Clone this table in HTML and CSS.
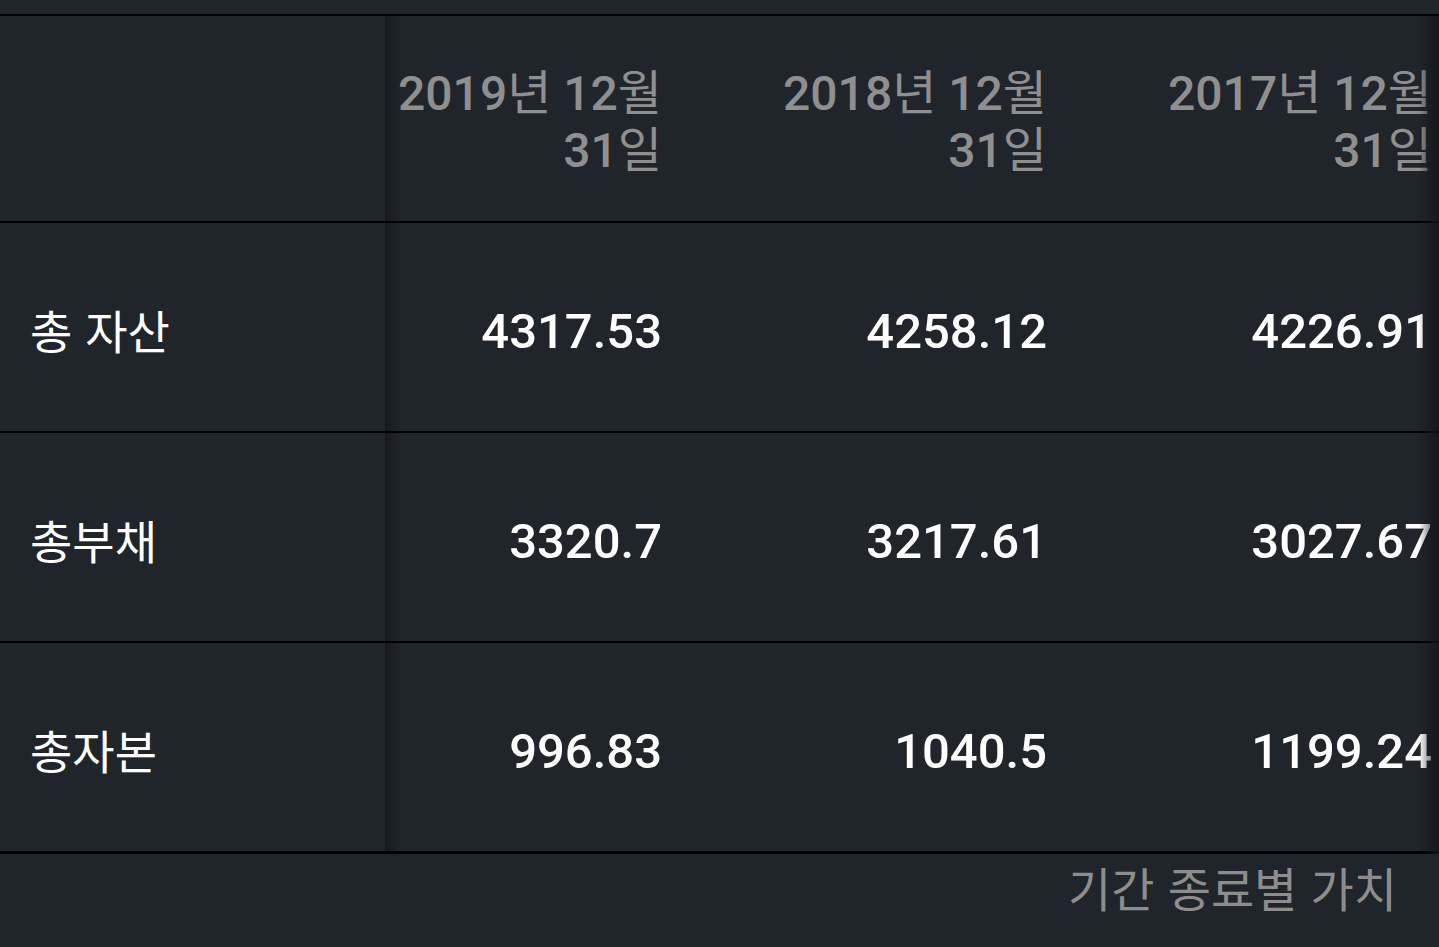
FILE: index.html
```html
<!DOCTYPE html>
<html lang="ko">
<head>
<meta charset="utf-8">
<title>재무상태표</title>
<link rel="stylesheet" href="styles.css">
</head>
<body>
<div class="page">
  <div class="top-strip"></div>
  <div class="table">
    <div class="row head">
      <div class="cell label"></div>
      <div class="cell date first"><p class="txt">2019<span class="k">년</span> 12<span class="k">월</span><br>31<span class="k">일</span></p></div>
      <div class="cell date"><p class="txt">2018<span class="k">년</span> 12<span class="k">월</span><br>31<span class="k">일</span></p></div>
      <div class="cell date"><p class="txt">2017<span class="k">년</span> 12<span class="k">월</span><br>31<span class="k">일</span></p></div>
    </div>
    <div class="row">
      <div class="cell label">총 자산</div>
      <div class="cell num first">4317.53</div>
      <div class="cell num">4258.12</div>
      <div class="cell num">4226.91</div>
    </div>
    <div class="row">
      <div class="cell label">총부채</div>
      <div class="cell num first">3320.7</div>
      <div class="cell num">3217.61</div>
      <div class="cell num">3027.67</div>
    </div>
    <div class="row last">
      <div class="cell label">총자본</div>
      <div class="cell num first">996.83</div>
      <div class="cell num">1040.5</div>
      <div class="cell num">1199.24</div>
    </div>
  </div>
  <div class="footer">기간 종료별 가치</div>
</div>
</body>
</html>
```

FILE: styles.css
```css
html, body {
  margin: 0;
  padding: 0;
  background: #20252b;
}
.page {
  width: 1439px;
  height: 947px;
  overflow: hidden;
  background: #20252b;
  font-family: Roboto, "Noto Sans CJK KR", sans-serif;
}
.top-strip {
  height: 14px;
  border-bottom: 2px solid #000;
}
.table {
  position: relative;
  overflow: hidden;
}
.table::after {
  content: "";
  position: absolute;
  top: 0;
  right: 0;
  bottom: 0;
  width: 20px;
  background: linear-gradient(to right, rgba(18, 21, 24, 0), rgba(18, 21, 24, 0.85));
  pointer-events: none;
}
.row {
  display: grid;
  grid-template-columns: 385px 385px 385px 385px;
  height: 208px;
  border-bottom: 2px solid #000;
}
.row.head {
  height: 205px;
}
.row.last {
  border-bottom-width: 3px;
}
.cell {
  display: flex;
  align-items: center;
  box-sizing: border-box;
}
.label {
  padding-left: 30px;
  padding-top: 4px;
  color: #ffffff;
  font-family: "Noto Sans CJK KR", sans-serif;
  font-size: 46px;
}
.date, .num {
  justify-content: flex-end;
  text-align: right;
  padding-right: 108px;
}
.first {
  background: linear-gradient(to right, #15181c 0, #1b1f24 6px, #20252b 16px);
}
.date {
  color: #8f8f8f;
  font-size: 48px;
  font-weight: 500;
  line-height: 57px;
  padding-top: 6px;
}
.txt {
  margin: 0;
}
.date .k {
  font-weight: 400;
}
.num {
  color: #ffffff;
  font-size: 49px;
  font-weight: 500;
  padding-top: 9px;
}
.footer {
  display: flex;
  justify-content: flex-end;
  padding-right: 42px;
  padding-top: 3px;
  color: #8d8d8d;
  font-family: "Noto Sans CJK KR", sans-serif;
  font-size: 47px;
  line-height: 60px;
}
```
